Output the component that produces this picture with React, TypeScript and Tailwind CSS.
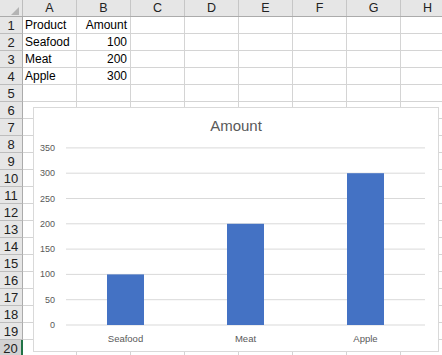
import React from "react";

const cols = ["A", "B", "C", "D", "E", "F", "G", "H"];
const data: Record<number, [string, string]> = {
  1: ["Product", "Amount"],
  2: ["Seafood", "100"],
  3: ["Meat", "200"],
  4: ["Apple", "300"],
};

const bars = [
  { label: "Seafood", value: 100, x: 73 },
  { label: "Meat", value: 200, x: 193 },
  { label: "Apple", value: 300, x: 313 },
];

function Chart() {
  const y0 = 217;
  const step = 25.3;
  const yOf = (v: number) => y0 - (v / 50) * step;
  const ticks = [0, 50, 100, 150, 200, 250, 300, 350];
  return (
    <div className="absolute left-[33px] top-[107px] w-[406px] h-[245px] border border-[#d9d9d9] bg-white">
      <svg width="404" height="243" className="block">
        <text x="202" y="23" textAnchor="middle" fontSize="15" fill="#595959" fontFamily="Liberation Sans, Arial, sans-serif">
          Amount
        </text>
        {ticks.map((t) => (
          <g key={t}>
            <line x1="32" x2="391" y1={yOf(t)} y2={yOf(t)} stroke="#d9d9d9" strokeWidth="1" />
            <text x="21" y={yOf(t) + 3} textAnchor="end" fontSize="9" fill="#595959" fontFamily="Liberation Sans, Arial, sans-serif">
              {t}
            </text>
          </g>
        ))}
        {bars.map((b) => (
          <g key={b.label}>
            <rect x={b.x} y={yOf(b.value)} width="37" height={y0 - yOf(b.value)} fill="#4472c4" />
            <text x={b.x + 18.5} y="234" textAnchor="middle" fontSize="9.5" fill="#595959" fontFamily="Liberation Sans, Arial, sans-serif">
              {b.label}
            </text>
          </g>
        ))}
      </svg>
    </div>
  );
}

export default function App() {
  const rows = Array.from({ length: 20 }, (_, i) => i + 1);
  return (
    <div className="relative w-[442px] h-[355px] overflow-hidden bg-white font-['Liberation_Sans',Arial,sans-serif] text-black">
      <div className="flex h-[17px] bg-[#e6e6e6] border-b border-[#ababab]">
        <div className="relative w-[23px] shrink-0 border-r border-[#bdbdbd]">
          <svg className="absolute left-[11px] top-[7px]" width="8" height="8" viewBox="0 0 8 8">
            <polygon points="8,0 8,8 0,8" fill="#b4b4b4" />
          </svg>
        </div>
        {cols.map((c) => (
          <div
            key={c}
            className="w-[54px] shrink-0 border-r border-[#c6c6c6] flex items-center justify-center text-[12.5px] text-[#222] leading-none"
          >
            {c}
          </div>
        ))}
      </div>
      {rows.map((r) => (
        <div key={r} className="flex h-[17px]">
          <div
            className={
              r === 20
                ? "w-[23px] shrink-0 bg-[#d2d2d2] border-r-2 border-[#217346] border-b border-b-[#ababab] flex items-center justify-center text-[13px] text-[#222] leading-none"
                : "w-[23px] shrink-0 bg-[#e6e6e6] border-r border-[#ababab] border-b border-b-[#bdbdbd] flex items-center justify-center text-[13px] text-[#222] leading-none"
            }
          >
            {r}
          </div>
          {cols.map((c, ci) => {
            const d = data[r];
            const text = d && ci < 2 ? d[ci] : "";
            return (
              <div
                key={c}
                className={
                  ci === 1
                    ? "w-[54px] shrink-0 border-r border-b border-[#d4d4d4] flex items-center justify-end pr-[3px] text-[12px] leading-none"
                    : "w-[54px] shrink-0 border-r border-b border-[#d4d4d4] flex items-center pl-[2px] text-[12px] leading-none"
                }
              >
                {text}
              </div>
            );
          })}
        </div>
      ))}
      <Chart />
    </div>
  );
}
